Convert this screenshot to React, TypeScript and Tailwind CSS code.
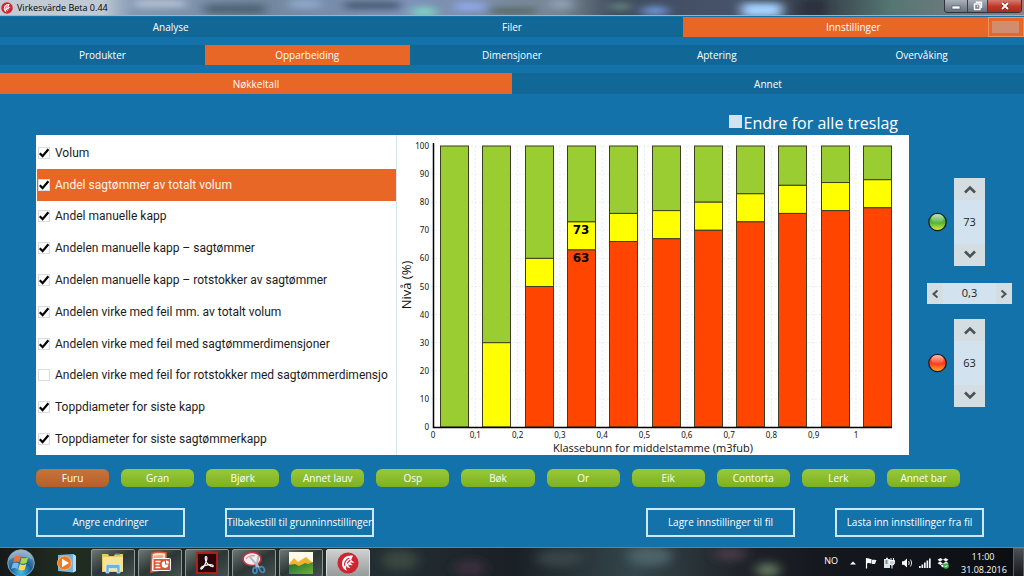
import { useState } from "react";
import type { ReactNode } from "react";

const mainTabs = ["Analyse", "Filer", "Innstillinger"];
const subTabs = ["Produkter", "Opparbeiding", "Dimensjoner", "Aptering", "Overvåking"];
const detailTabs = ["Nøkkeltall", "Annet"];

const keyFigures = [
  { label: "Volum", on: true },
  { label: "Andel sagtømmer av totalt volum", on: true },
  { label: "Andel manuelle kapp", on: true },
  { label: "Andelen manuelle kapp – sagtømmer", on: true },
  { label: "Andelen manuelle kapp – rotstokker av sagtømmer", on: true },
  { label: "Andelen virke med feil mm. av totalt volum", on: true },
  { label: "Andelen virke med feil med sagtømmerdimensjoner", on: true },
  { label: "Andelen virke med feil for rotstokker med sagtømmerdimensjo", on: false },
  { label: "Toppdiameter for siste kapp", on: true },
  { label: "Toppdiameter for siste sagtømmerkapp", on: true },
];

const levels = [
  { red: 0, yellow: 0 },
  { red: 0, yellow: 30 },
  { red: 50, yellow: 60 },
  { red: 63, yellow: 73 },
  { red: 66, yellow: 76 },
  { red: 67, yellow: 77 },
  { red: 70, yellow: 80 },
  { red: 73, yellow: 83 },
  { red: 76, yellow: 86 },
  { red: 77, yellow: 87 },
  { red: 78, yellow: 88 },
];
const classLabels = ["0", "0,1", "0,2", "0,3", "0,4", "0,5", "0,6", "0,7", "0,8", "0,9", "1"];

const species = ["Furu", "Gran", "Bjørk", "Annet lauv", "Osp", "Bøk", "Or", "Eik", "Contorta", "Lerk", "Annet bar"];

function AppMark({ className }: { className: string }) {
  return (
    <svg viewBox="0 0 24 24" className={className} aria-hidden="true">
      <circle cx="12" cy="12" r="11.5" fill="#cf2432" />
      <path d="M17.500 4C10.500 3 5.500 7 5.500 13c0 3.500 2 6.500 5.500 7.500-1.200-1.700-1.500-3.500-.8-5.200 1.200 1.800 2.800 2.400 4.600 2-1.700-1-2.600-2.300-2.500-4 1.300 1.200 3 1.600 5 1-1.600-.8-2.500-1.900-2.500-3.300 1.400.8 2.900.9 4.400.2-1.700-.7-3-1.500-3.700-2.700.6-1.700 1.200-3 2-4.500z" fill="#fff" />
      <path d="M8.300 15C7.800 11.500 9.500 8.300 13.500 6.500M11 12.500l3.500-4" stroke="#cf2432" strokeWidth="1.300" fill="none" />
    </svg>
  );
}

function TitleBar() {
  return (
    <header className="relative flex h-4 items-center overflow-hidden bg-[#8d9cae]">
      <svg className="absolute inset-0 h-full w-full" viewBox="0 0 1024 16" preserveAspectRatio="none" aria-hidden="true">
        <defs>
          <linearGradient id="glass">
            <stop offset="0" stopColor="#c5ccd4" />
            <stop offset=".1" stopColor="#bfc9d4" />
            <stop offset=".13" stopColor="#8398b2" />
            <stop offset=".26" stopColor="#7488a0" />
            <stop offset=".4" stopColor="#7e93b8" />
            <stop offset=".55" stopColor="#76858f" />
            <stop offset=".6" stopColor="#3f4c5e" />
            <stop offset=".72" stopColor="#46536a" />
            <stop offset=".8" stopColor="#343d46" />
            <stop offset=".87" stopColor="#557673" />
            <stop offset=".95" stopColor="#747b82" />
            <stop offset="1" stopColor="#8f8287" />
          </linearGradient>
          <filter id="soft" x="-50%" y="-100%" width="200%" height="300%">
            <feGaussianBlur stdDeviation="6 3" />
          </filter>
        </defs>
        <rect width="1024" height="16" fill="url(#glass)" />
        <g filter="url(#soft)">
          <rect x="135" y="0" width="50" height="7" fill="#b9c5d5" />
          <rect x="205" y="4" width="60" height="10" fill="#4e6474" />
          <rect x="290" y="0" width="30" height="8" fill="#93abce" />
          <rect x="345" y="2" width="55" height="7" fill="#43566c" />
          <ellipse cx="424" cy="12" rx="13" ry="5" fill="#7fd6c4" />
          <rect x="455" y="2" width="30" height="9" fill="#90a7ea" />
          <rect x="490" y="8" width="45" height="6" fill="#53655f" />
          <rect x="550" y="0" width="22" height="8" fill="#92a3bd" />
          <rect x="610" y="3" width="20" height="7" fill="#68857f" />
          <ellipse cx="655" cy="11" rx="14" ry="5" fill="#6f93d2" />
          <rect x="800" y="0" width="25" height="16" fill="#29323c" />
        </g>
        <g filter="url(#soft)">
          <rect x="742" y="3" width="40" height="14" fill="#a4d2ff" />
        </g>
        <rect y="15" width="1024" height="1" fill="#9fb3c2" />
      </svg>
      <div className="relative flex items-center gap-1 pl-px">
        <AppMark className="size-3" />
        <h1 className="text-[9px] leading-4 text-black">Virkesvärde Beta 0.44</h1>
      </div>
      <div className="relative mr-0.5 ml-auto flex h-[13px] self-start overflow-hidden rounded-b-sm border border-t-0 border-[#2e333b] text-white">
        <button aria-label="Minimer" className="flex w-[23px] items-center justify-center border-r border-[#3a4048] bg-linear-to-b from-[#a9b0b9] to-[#66707c]">
          <svg viewBox="0 0 10 10" className="size-2.5" aria-hidden="true"><rect x="1" y="5" width="8" height="3" fill="#fff" stroke="#444c58" strokeWidth=".6" /></svg>
        </button>
        <button aria-label="Gjenopprett" className="flex w-[20px] items-center justify-center border-r border-[#3a4048] bg-linear-to-b from-[#a9b0b9] to-[#66707c]">
          <svg viewBox="0 0 10 10" className="size-2.5" aria-hidden="true" fill="none" stroke="#fff" strokeWidth="1.400"><path d="M3.500 2V1.200h5v5H7.500" /><rect x="1.500" y="3" width="5.500" height="5.500" /><path d="M4 5.500h.8" /></svg>
        </button>
        <button aria-label="Lukk" className="flex w-[33px] items-center justify-center bg-linear-to-b from-[#d57c70] via-[#c03a2b] to-[#a92a1b]">
          <svg viewBox="0 0 10 10" className="size-2.5" aria-hidden="true"><path d="M2 2l6 6M8 2L2 8" stroke="#5b1710" strokeWidth="3" /><path d="M2 2l6 6M8 2L2 8" stroke="#fff" strokeWidth="2" /></svg>
        </button>
      </div>
    </header>
  );
}

function TabRow({ tabs, active, onPick, className, label }: { tabs: string[]; active: string; onPick: (t: string) => void; className: string; label: string }) {
  return (
    <nav aria-label={label} className={"flex bg-[#116796] " + className}>
      {tabs.map((t) => (
        <button
          key={t}
          onClick={() => onPick(t)}
          aria-pressed={t === active}
          className={"flex-1 text-[10px] leading-5 text-white " + (t === active ? "bg-[#e86626]" : "")}
        >
          {t}
        </button>
      ))}
    </nav>
  );
}

function KeyFigureList() {
  const [checks, setChecks] = useState(keyFigures.map((k) => k.on));
  return (
    <ul className="flex min-w-0 flex-col border-r border-[#d5e5ef] bg-white pt-0.5 pl-px">
      {keyFigures.map((k, i) => (
        <li key={k.label} className={"flex-1 " + (i === 1 ? "bg-[#e86626] text-[#fff3e6]" : "text-[#1c1c1c]")}>
          <label className="flex h-full items-center gap-[5px] overflow-hidden pl-px whitespace-nowrap">
            <span className="relative size-3 shrink-0">
              <input
                type="checkbox"
                checked={checks[i]}
                onChange={() => setChecks(checks.map((c, n) => (n === i ? !c : c)))}
                className="peer block size-3 appearance-none border border-[#d9dde0] bg-white"
              />
              <svg viewBox="0 0 12 12" className="pointer-events-none absolute inset-0 hidden size-3 peer-checked:block" aria-hidden="true">
                <path d="M1.800 6.200l2.800 3 5.800-7" fill="none" stroke="#000" strokeWidth="2.200" />
              </svg>
            </span>
            <span className="font-['Roboto','Open_Sans',sans-serif] text-[12px] leading-4">{k.label}</span>
          </label>
        </li>
      ))}
    </ul>
  );
}

function LevelChart() {
  const left = 36;
  const base = 292;
  const step = 42.3;
  const unit = 2.81;
  const y = (v: number) => base - v * unit;
  return (
    <svg viewBox="0 0 512 320" className="block h-auto w-full bg-white" role="img" aria-label="Nivå (%) per klassebunn for middelstamme">
      {classLabels.slice(1).map((c, i) => (
        <line key={c} x1={left + (i + 1) * step} x2={left + (i + 1) * step} y1="11" y2={base + 4} stroke="#e9eef2" strokeDasharray="2 2" />
      ))}
      {Array.from({ length: 11 }, (_, i) => i * 10).map((v) => (
        <g key={v}>
          <line x1="34" x2="496" y1={y(v)} y2={y(v)} stroke="#e9eef2" strokeDasharray="2 2" />
          <text x="32" y={y(v) + 3} textAnchor="end" fontSize="8" fill="#111" className="font-['Noto_Sans',sans-serif]">{v}</text>
        </g>
      ))}
      {levels.map((l, i) => {
        const x = Math.round(left + 7 + i * step) + 0.5;
        return (
          <g key={i} stroke="#3d3d22">
            <rect x={x} y={y(100)} width="28" height={(100 - l.yellow) * unit} fill="#9acd32" />
            {l.yellow > 0 && <rect x={x} y={y(l.yellow)} width="28" height={(l.yellow - l.red) * unit} fill="#ffff00" />}
            {l.red > 0 && <rect x={x} y={y(l.red)} width="28" height={l.red * unit} fill="#ff4500" />}
          </g>
        );
      })}
      <g className="font-['DejaVu_Sans',sans-serif]" fontSize="12" fontWeight="700" textAnchor="middle">
        <text x="184" y="99">73</text>
        <text x="184" y="127">63</text>
      </g>
      <path d="M36.500 8V292.500H495" fill="none" stroke="#000" strokeWidth="1.500" />
      {classLabels.map((c, i) => (
        <text key={c} x={left + i * step} y="303" textAnchor="middle" fontSize="8" fill="#111" className="font-['Noto_Sans',sans-serif]">{c}</text>
      ))}
      <text x="256" y="317" textAnchor="middle" fontSize="11" fill="#111">Klassebunn for middelstamme (m3fub)</text>
      <text transform="translate(14 150) rotate(-90)" textAnchor="middle" fontSize="13" fill="#111">Nivå (%)</text>
    </svg>
  );
}

function Led({ id, top, bottom }: { id: string; top: string; bottom: string }) {
  return (
    <svg viewBox="0 0 20 20" className="size-5 shrink-0" aria-hidden="true">
      <defs>
        <linearGradient id={id} x1="0" y1="0" x2="0" y2="1">
          <stop offset="0" stopColor={top} />
          <stop offset=".55" stopColor={top} />
          <stop offset="1" stopColor={bottom} />
        </linearGradient>
        <linearGradient id={id + "Shine"} x1="0" y1="0" x2="0" y2="1">
          <stop offset="0" stopColor="#fff" stopOpacity=".65" />
          <stop offset="1" stopColor="#fff" stopOpacity=".05" />
        </linearGradient>
      </defs>
      <circle cx="10.500" cy="10" r="8.700" fill={"url(#" + id + ")"} stroke="#17202a" strokeWidth="1.300" />
      <ellipse cx="10.500" cy="6.500" rx="6.200" ry="4.500" fill={"url(#" + id + "Shine)"} />
    </svg>
  );
}

function Chevron({ d }: { d: string }) {
  return (
    <svg viewBox="0 0 12 12" className="size-3" aria-hidden="true">
      <path d={d} fill="none" stroke="#4b5257" strokeWidth="2.600" />
    </svg>
  );
}

const UP = "M1 9.500l5-5 5 5";
const DOWN = "M1 2.500l5 5 5-5";

function LevelStepper({ label, value, onChange, led }: { label: string; value: number; onChange: (v: number) => void; led: ReactNode }) {
  return (
    <div className="flex items-center gap-[7px]">
      {led}
      <div className="flex h-[88px] w-[31px] flex-col bg-[#d2e3ef]">
        <button aria-label={label + " opp"} onClick={() => onChange(value + 1)} className="flex h-[22px] items-center justify-center bg-[#d3dde2]">
          <Chevron d={UP} />
        </button>
        <input aria-label={label} value={value} onChange={(e) => onChange(Number(e.target.value) || 0)} className="w-full min-w-0 flex-1 text-center text-[11px] text-[#1c1c1c]" />
        <button aria-label={label + " ned"} onClick={() => onChange(value - 1)} className="flex h-[22px] items-center justify-center bg-[#d3dde2]">
          <Chevron d={DOWN} />
        </button>
      </div>
    </div>
  );
}

function SidePanel() {
  const [green, setGreen] = useState(73);
  const [red, setRed] = useState(63);
  const [cls, setCls] = useState(3);
  return (
    <aside className="flex w-[115px] shrink-0 flex-col pt-[67px] pr-3 pl-[18px]">
      <LevelStepper label="Grønn grense" value={green} onChange={setGreen} led={<Led id="ledGreen" top="#53b238" bottom="#e4f72a" />} />
      <div className="mt-[17px] mb-[15px] flex h-[21px] bg-[#d2e3ef]">
        <button aria-label="Forrige klasse" onClick={() => setCls(Math.max(0, cls - 1))} className="flex w-4 items-center justify-center bg-[#d3dde2]">
          <svg viewBox="0 0 10 10" className="size-2.5" aria-hidden="true"><path d="M7.500 1.500L3.500 5l4 3.500" fill="none" stroke="#4b5257" strokeWidth="2" /></svg>
        </button>
        <input aria-label="Klasse" readOnly value={classLabels[cls]} className="w-full min-w-0 flex-1 text-center text-[11px] text-[#1c1c1c]" />
        <button aria-label="Neste klasse" onClick={() => setCls(Math.min(10, cls + 1))} className="flex w-4 items-center justify-center bg-[#d3dde2]">
          <svg viewBox="0 0 10 10" className="size-2.5" aria-hidden="true"><path d="M2.500 1.500L6.500 5l-4 3.500" fill="none" stroke="#4b5257" strokeWidth="2" /></svg>
        </button>
      </div>
      <LevelStepper label="Rød grense" value={red} onChange={setRed} led={<Led id="ledRed" top="#ff3d1c" bottom="#ffb52a" />} />
    </aside>
  );
}

function ActionButton({ children }: { children: ReactNode }) {
  return (
    <button className="h-[29px] w-[149px] border-2 border-[#cfe8f6] text-[10px] whitespace-nowrap text-white">
      {children}
    </button>
  );
}

function TaskButton({ label, active, children }: { label: string; active?: boolean; children: ReactNode }) {
  return (
    <button
      aria-label={label}
      className={
        "flex h-7 w-11 items-center justify-center rounded-xs border " +
        (active ? "border-[#d8dadb] bg-linear-to-b from-[#cfd0d0] to-[#989b9b]" : "border-[#8e9896] bg-linear-to-br from-[#6d7776] via-[#2c3635] to-[#47504f]")
      }
    >
      {children}
    </button>
  );
}

function StartOrb() {
  return (
    <svg viewBox="0 0 28 28" className="size-7" aria-hidden="true">
      <defs>
        <radialGradient id="orb" cx=".5" cy=".85" r=".8">
          <stop offset="0" stopColor="#3fc0e8" />
          <stop offset=".5" stopColor="#1d5f95" />
          <stop offset="1" stopColor="#6d9cbb" />
        </radialGradient>
      </defs>
      <circle cx="14" cy="14" r="13.300" fill="url(#orb)" stroke="#8fb2c6" strokeWidth=".8" />
      <path d="M2 11a12.200 12.200 0 0 1 24 0c-6-4.500-18-4.500-24 0z" fill="#fff" opacity=".28" />
      <path d="M7.500 8c2.100-1.500 4.200-1.500 6.200-.2l-1.500 5.600c-2-1.300-4.100-1.100-6.200.2z" fill="#f0703a" />
      <path d="M14.600 8.400c2.100 1.200 4.200 1.100 6.500-.2l-1.500 5.600c-2.100 1.300-4.400 1.300-6.500.1z" fill="#a3d653" />
      <path d="M5.700 14.600c2.100-1.300 4.200-1.400 6.200-.2l-1.500 5.500c-2-1.200-4.100-1.100-6.200.2z" fill="#6cbcf2" />
      <path d="M12.800 15c2.100 1.200 4.300 1.200 6.500 0l-1.500 5.500c-2.100 1.200-4.400 1.200-6.500 0z" fill="#fdd84f" />
    </svg>
  );
}

function Taskbar() {
  return (
    <footer className="relative mt-auto flex h-[30px] items-center overflow-hidden border-t border-[#7c7c70] bg-[#111517]">
      <svg className="absolute inset-0 h-full w-full" viewBox="0 0 1024 29" preserveAspectRatio="none" aria-hidden="true">
        <defs>
          <linearGradient id="bar">
            <stop offset="0" stopColor="#16191a" />
            <stop offset=".06" stopColor="#202c20" />
            <stop offset=".25" stopColor="#1d2928" />
            <stop offset=".38" stopColor="#242e33" />
            <stop offset=".5" stopColor="#1a2025" />
            <stop offset=".62" stopColor="#34464b" />
            <stop offset=".72" stopColor="#20242a" />
            <stop offset=".8" stopColor="#15191f" />
            <stop offset="1" stopColor="#0a0d12" />
          </linearGradient>
          <filter id="haze" x="-50%" y="-100%" width="200%" height="300%">
            <feGaussianBlur stdDeviation="6 4" />
          </filter>
        </defs>
        <rect width="1024" height="29" fill="url(#bar)" />
        <g filter="url(#haze)">
          <ellipse cx="400" cy="12" rx="18" ry="10" fill="#3b4740" />
          <ellipse cx="470" cy="20" rx="16" ry="8" fill="#3a2f3c" />
          <ellipse cx="560" cy="10" rx="24" ry="8" fill="#39444a" />
          <ellipse cx="650" cy="8" rx="22" ry="10" fill="#4c6467" />
          <ellipse cx="730" cy="6" rx="16" ry="7" fill="#443a45" />
          <ellipse cx="768" cy="22" rx="12" ry="7" fill="#63785f" />
        </g>
      </svg>
      <button aria-label="Start" className="relative ml-[7px]"><StartOrb /></button>
      <button aria-label="Windows Media Player" className="relative ml-5 flex w-[22px] justify-center">
        <svg viewBox="0 0 22 22" className="size-[22px]" aria-hidden="true">
          <path d="M3 3l15-1 3 2v15l-3 1.500L3 19z" fill="#74b3dc" />
          <path d="M18 2l3 2v15l-3 1.500z" fill="#b5dbf0" />
          <circle cx="9.500" cy="11" r="7" fill="#f07a22" stroke="#fbc38b" strokeWidth=".8" />
          <path d="M7 6.800v8.400l7-4.200z" fill="#fff" />
        </svg>
      </button>
      <div className="relative ml-[14px] flex gap-[3px]">
        <TaskButton label="Windows Utforsker">
          <svg viewBox="0 0 26 24" className="h-6 w-[26px]" aria-hidden="true">
            <path d="M2 3h6l1 2h5l1-2h8v18H2z" fill="#e8c95f" />
            <path d="M3 6h20v14H3z" fill="#f7e394" />
            <path d="M15 2.500h5V4h-5z" fill="#63a967" />
            <path d="M6 22v-6.500c0-1.500 1-2 2-2h10c1 0 2 .5 2 2V22h-3v-4.500H9V22z" fill="#69b6e2" stroke="#d6effb" strokeWidth=".7" />
          </svg>
        </TaskButton>
        <TaskButton label="PowerPoint">
          <svg viewBox="0 0 26 24" className="h-6 w-[26px]" aria-hidden="true">
            <path d="M5 2.500C9 1 14 1 19 2v16L4 21z" fill="#fbe3da" stroke="#dc5a38" strokeWidth="1.600" />
            <path d="M7 4.500l9-.5v3H6.500z" fill="#f2a88f" />
            <rect x="6" y="7.500" width="17.500" height="12" rx=".8" fill="#dd5631" stroke="#fff" strokeWidth="1" />
            <path d="M8.500 10.500h5M8.500 13.500h4M8.500 16.500h5" stroke="#fff" strokeWidth="1.500" />
            <path d="M18 10.300a3.300 3.300 0 1 0 3.300 3.300H18z" fill="#fff" />
            <path d="M19 9.500v3h3a3 3 0 0 0-3-3z" fill="#fff" />
          </svg>
        </TaskButton>
        <TaskButton label="Adobe Reader">
          <svg viewBox="0 0 22 22" className="size-[22px]" aria-hidden="true">
            <rect x="1" y="1" width="20" height="20" fill="#270708" stroke="#b81f1c" strokeWidth="1.800" />
            <path d="M10 4.500c1.500 0 1 3.500-.6 7-1.400 3.200-3.400 6-4.400 5.500-1.200-.8 2-3.500 6.500-4.200 3.500-.6 6 .2 5.700 1.400-.4 1.200-3.600-.2-5.700-2.500C9.300 9.500 8.600 4.500 10 4.500z" fill="none" stroke="#fff" strokeWidth="1.200" />
          </svg>
        </TaskButton>
        <TaskButton label="Utklippsverktøy">
          <svg viewBox="0 0 26 24" className="h-6 w-[26px]" aria-hidden="true">
            <ellipse cx="11" cy="8" rx="9" ry="6.500" fill="#eef0f2" stroke="#c8313d" strokeWidth="1.700" />
            <path d="M5 8c2-3 6-4 9-3" stroke="#d98b92" strokeWidth="1.200" fill="none" />
            <path d="M9 6l9.500 11M17.500 5L15 17" stroke="#aebac4" strokeWidth="2" />
            <ellipse cx="21" cy="18.500" rx="2.200" ry="3" transform="rotate(-35 21 18.500)" fill="none" stroke="#4488bd" strokeWidth="1.800" />
            <ellipse cx="14" cy="19.500" rx="2" ry="2.800" fill="none" stroke="#4488bd" strokeWidth="1.800" />
          </svg>
        </TaskButton>
        <TaskButton label="Bildevisning">
          <svg viewBox="0 0 24 22" className="h-[22px] w-6" aria-hidden="true">
            <defs>
              <linearGradient id="hill" x1="0" y1="0" x2="1" y2="1"><stop offset="0" stopColor="#1d6b2f" /><stop offset="1" stopColor="#6fb03a" /></linearGradient>
            </defs>
            <rect width="24" height="22" fill="#fdfbe9" />
            <path d="M0 12l5-6 4 4 3-2 5-3 7 6v3H0z" fill="#f1b22c" />
            <path d="M0 13l6-1 4 2 6-3 3 1 5-2v12H0z" fill="url(#hill)" />
          </svg>
        </TaskButton>
        <TaskButton label="Virkesvärde" active>
          <AppMark className="size-[22px]" />
        </TaskButton>
      </div>
      <div className="relative ml-auto flex h-full items-center text-white">
        <span className="mr-3 mb-1 text-[9px] leading-3">NO</span>
        <div className="flex items-center gap-1.5">
          <svg viewBox="0 0 6 4" className="mr-[3px] h-1 w-1.5" aria-hidden="true"><path d="M0 3.500L3 .5l3 3z" fill="#fff" /></svg>
          <svg viewBox="0 0 12 12" className="size-3" aria-hidden="true"><path d="M1.500 1v10.500" stroke="#fff" strokeWidth="1.200" /><path d="M2 1.500c2-1 3 .8 4.500.5v4.500C5 6.800 4 5.500 2 6.500z" fill="#fff" /><path d="M7 3c1.500-.5 2.500.3 4.500 0L10 7H7z" fill="#e8eef2" /></svg>
          <svg viewBox="0 0 12 12" className="size-3" aria-hidden="true"><path d="M1 2h6v9H1zM3 .8h2V2H3z" fill="#dfe5e8" /><path d="M2.500 4h2M2.500 6h2" stroke="#30363b" /><path d="M8 1v2.500M10.500 1v2.500M6.500 3.500h5v2.200c0 1.500-1 2.300-2.500 2.300S6.500 7.200 6.500 5.700zM9 8v3.500" stroke="#fff" strokeWidth="1" fill="#c9d1d6" /></svg>
          <svg viewBox="0 0 12 12" className="size-3" aria-hidden="true"><path d="M1 4.300h2L6 1.500v9L3 7.800H1z" fill="#fff" /><path d="M7.500 4c.9 1 .9 3 0 4M9.300 2.500c1.700 2 1.700 5 0 7" stroke="#dfe5e8" fill="none" /></svg>
          <svg viewBox="0 0 12 12" className="size-3" aria-hidden="true" fill="#f2f4f5"><rect x="0" y="9" width="1.700" height="2" /><rect x="2.500" y="7.500" width="1.700" height="3.500" /><rect x="5" y="5.500" width="1.700" height="5.500" /><rect x="7.500" y="3.500" width="1.700" height="7.500" /><rect x="10" y="1.500" width="1.700" height="9.500" /></svg>
          <svg viewBox="0 0 12 12" className="size-3" aria-hidden="true"><path d="M3.500 1L6 2.700 3 4.500.5 2.700zM8.500 1L6 2.700l3 1.800 2.500-1.800zM.5 6.300L3 4.500l3 2L3.500 8zM11.500 6.300L9 4.500l-3 2L8.500 8zM3.500 8.700L6 7.200l2.500 1.500L6 10.500z" fill="#f4f6f8" /><circle cx="9" cy="9" r="2.800" fill="#37b34a" /><path d="M7.800 9l1 1 1.600-2" stroke="#fff" fill="none" strokeWidth=".8" /></svg>
        </div>
        <div className="ml-3 w-11 text-center text-[9px] leading-[13px] whitespace-nowrap">
          <time className="block">11:00</time>
          <time className="block">31.08.2016</time>
        </div>
        <button aria-label="Vis skrivebordet" className="ml-2 h-full w-[11px] border border-[#5a6066] bg-linear-to-b from-[#4a5055] to-[#15191c]" />
      </div>
    </footer>
  );
}

export default function App() {
  const [main, setMain] = useState("Innstillinger");
  const [sub, setSub] = useState("Opparbeiding");
  const [detail, setDetail] = useState("Nøkkeltall");
  const [tree, setTree] = useState("Furu");
  const [all, setAll] = useState(false);

  return (
    <div className="flex min-h-screen flex-col overflow-hidden bg-[#1372a9] font-['Open_Sans','Noto_Sans',sans-serif]">
      <TitleBar />
      <div className="relative">
        <TabRow label="Hovedmeny" tabs={mainTabs} active={main} onPick={setMain} className="h-[21px] border-t border-[#1372a9]" />
        <button aria-label="Vindusvalg" className="absolute top-px right-0 flex h-5 w-9 border border-[#f0935f] p-[3px] pr-1">
          <span className="flex-1 bg-[#d18d70]" />
        </button>
      </div>
      <TabRow label="Innstillinger" tabs={subTabs} active={sub} onPick={setSub} className="mt-2 h-5" />
      <TabRow label="Opparbeiding" tabs={detailTabs} active={detail} onPick={setDetail} className="mt-2 h-[21px]" />

      <main className="flex pt-[17px] pl-9">
        <div className="min-w-0 flex-1">
          <label className="flex h-6 items-center justify-end gap-0.5 pr-[11px] text-white">
            <input type="checkbox" checked={all} onChange={() => setAll(!all)} className="mb-1 size-[13px] appearance-none bg-[#d2e3ef] checked:bg-[#e86626]" />
            <span className="text-[16px] leading-5">Endre for alle treslag</span>
          </label>
          <div className="grid grid-cols-[361fr_512fr] bg-white">
            <KeyFigureList />
            <LevelChart />
          </div>
        </div>
        <SidePanel />
      </main>

      <div className="mt-3.5 mr-16 ml-9 grid grid-cols-11 gap-3">
        {species.map((s) => (
          <button
            key={s}
            onClick={() => setTree(s)}
            aria-pressed={s === tree}
            className={
              "h-[18px] rounded-md text-[10px] leading-[18px] whitespace-nowrap text-white " +
              (s === tree ? "bg-linear-to-b from-[#c9733c] to-[#b55f2a]" : "bg-linear-to-b from-[#98c93a] to-[#7fb01f]")
            }
          >
            {s}
          </button>
        ))}
      </div>

      <div className="mt-[21px] mb-2.5 flex justify-between pr-10 pl-9">
        <div className="flex gap-10">
          <ActionButton>Angre endringer</ActionButton>
          <ActionButton>Tilbakestill til grunninnstillinger</ActionButton>
        </div>
        <div className="flex gap-10">
          <ActionButton>Lagre innstillinger til fil</ActionButton>
          <ActionButton>Lasta inn innstillinger fra fil</ActionButton>
        </div>
      </div>
      <Taskbar />
    </div>
  );
}
